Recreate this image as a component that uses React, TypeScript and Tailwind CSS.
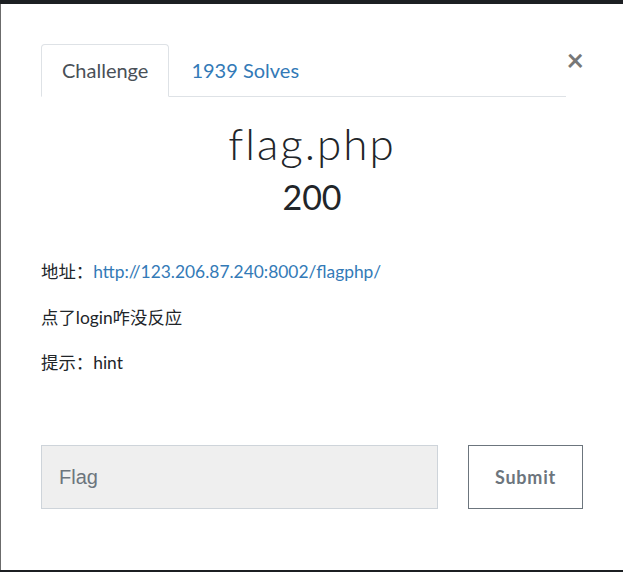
export default function App() {
  return (
    <div className="w-[623px] h-[572px] bg-[#1c1f22] pt-[4px] overflow-hidden font-['Lato','Noto_Sans_CJK_SC',sans-serif]">
      <div className="relative h-[566px] bg-white border-l border-[#6b6b6b] pl-[40px] pr-[40px]">
        {/* tabs */}
        <div className="pt-[40px] flex items-start">
          <div className="flex w-[525px] border-b border-[#dee2e6]">
            <div className="-mb-px px-5 py-[10px] border border-[#dee2e6] border-b-white rounded-t-[4px] bg-white text-[20px] leading-[30px] text-[#495057]">
              Challenge
            </div>
            <div className="px-[22px] py-[11px] text-[20px] leading-[30px] text-[#337ab7]">1939 Solves</div>
          </div>
          <button className="ml-auto -mr-[1px] mt-0 text-[30px] leading-[30px] font-bold text-[#777]">×</button>
        </div>

        {/* title */}
        <div className="mt-[21px] text-center text-[#212529]">
          <h3 className="text-[44px] leading-[50px] font-light tracking-[2px]">flag.php</h3>
          <h4 className="text-[34px] leading-[40px] mt-[9px]">200</h4>
        </div>

        {/* description */}
        <div className="mt-[42px] text-[17.4px] leading-[25px] text-[#212529]">
          <p>
            地址：<span className="text-[#337ab7]">http://123.206.87.240:8002/flagphp/</span>
          </p>
          <p className="mt-[21px]">点了login咋没反应</p>
          <p className="mt-[20px]">提示：hint</p>
        </div>

        {/* form */}
        <div className="mt-[70px] flex items-center">
          <div className="w-[397px] h-[64px] bg-[#efefef] border border-[#ced4da] flex items-center pl-[17px] text-[20px] text-[#6c757d] font-['Liberation_Sans',sans-serif]">
            Flag
          </div>
          <button className="ml-[30px] w-[115px] h-[64px] border border-[#6c757d] text-[18px] font-bold tracking-[0.8px] text-[#6c757d]">
            Submit
          </button>
        </div>
      </div>
    </div>
  );
}
